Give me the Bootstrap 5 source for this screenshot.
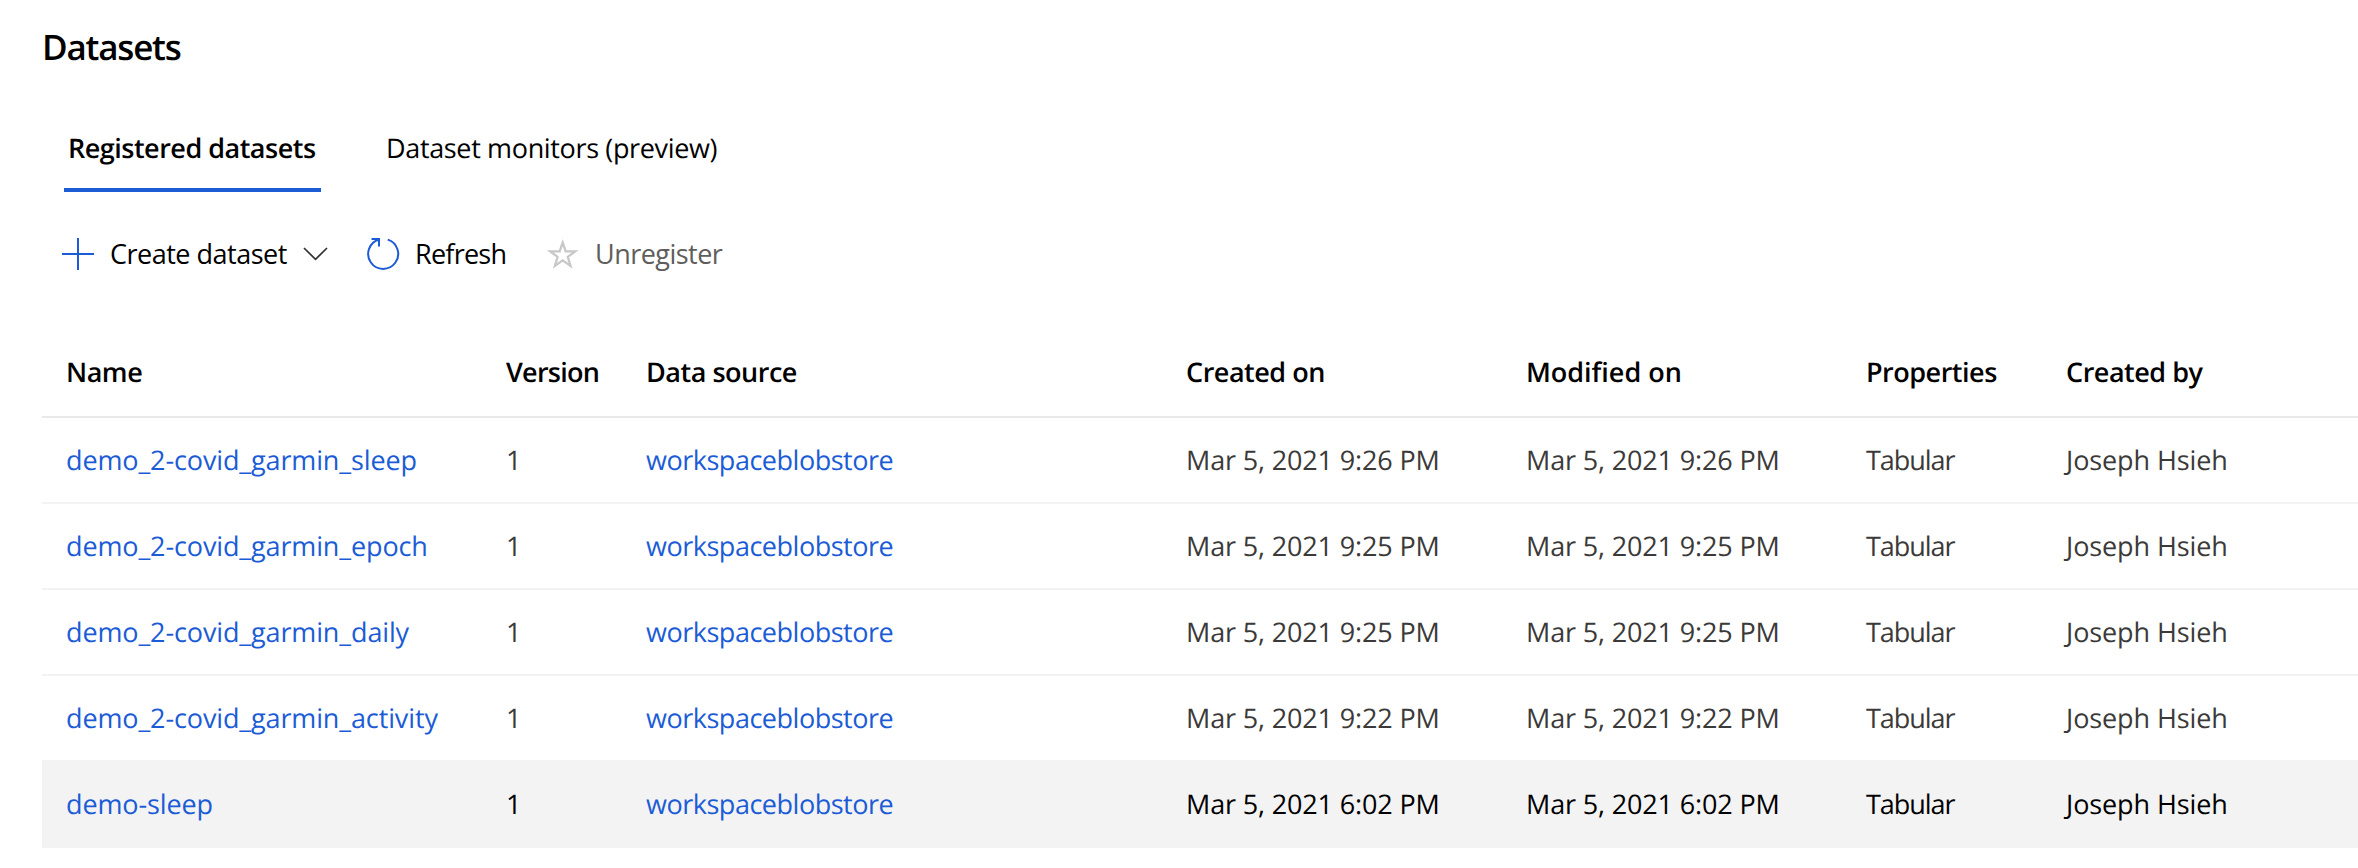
<!DOCTYPE html>
<html lang="en">
<head>
<meta charset="utf-8">
<meta name="viewport" content="width=device-width, initial-scale=1">
<title>Datasets</title>
<link href="https://cdn.jsdelivr.net/npm/bootstrap@5.3.0/dist/css/bootstrap.min.css" rel="stylesheet">
<style>
body { font-family: "Open Sans", "Noto Sans", sans-serif; font-size: 27px; color: #000; text-rendering: geometricPrecision; overflow: hidden; }
.page { padding: 18px 0 0 42px; }
.page-title { font-size: 35px; font-weight: 600; line-height: 60px; letter-spacing: -1.2px; margin: 0 0 29px; }
.tabs { gap: 60px; padding-left: 22px; }
.tabs .nav-link { color: #000; line-height: 81px; padding: 0 5px; border-bottom: 4px solid transparent; letter-spacing: -.35px; }
.tabs .nav-link.active { font-weight: 600; border-color: #1b5cd6; letter-spacing: -.5px; width: 257px; padding-left: 4px; white-space: nowrap; }
.toolbar { height: 48px; margin-top: 38px; padding-left: 19px; }
.tool { border: 0; padding: 0; background: none; color: #000; font-size: 27px; line-height: 48px; white-space: nowrap; letter-spacing: -.5px; text-align: left; }
.tool svg { flex: none; }
.tool span { margin-left: 15px; }
.tool-create { width: 305px; }
.tool-refresh { width: 180px; letter-spacing: -.75px; }
.tool-off, .tool-off:disabled { color: #605e5c; letter-spacing: -.53px; }
.grid-table { table-layout: fixed; margin-top: 48px; width: 2316px; color: #3b3a39; letter-spacing: -.15px; --bs-table-bg: transparent; }
.grid-table > :not(caption) > * > * { padding: 0; white-space: nowrap; border-bottom: 2px solid #f3f3f3; color: inherit; }
.grid-table > thead > tr > th { line-height: 89px; padding-top: 1px; font-weight: 600; color: #000; border-bottom-color: #e9e9e9; letter-spacing: -.48px; }
.grid-table > tbody > tr > td { line-height: 84px; }
.grid-table > :not(caption) > tr > :first-child { padding-left: 24px; }
.grid-table a { color: #1b5cd6; text-decoration: none; }
.grid-table .ds-name { letter-spacing: -.13px; }
.grid-table .ds-source { letter-spacing: -.48px; }
.grid-table .ds-kind { letter-spacing: -1.05px; }
.grid-table .ds-owner { letter-spacing: -.1px; }
.row-hover { background: #f3f3f3; color: #000; }
.grid-table > thead > tr > .tight { letter-spacing: -.75px; }
.grid-table > thead > tr > .loose { letter-spacing: -.02px; }
</style>
</head>
<body class="bg-white">
<main class="page">
  <h1 class="page-title">Datasets</h1>
  <nav class="nav tabs">
    <a class="nav-link active" href="#">Registered datasets</a>
    <a class="nav-link" href="#">Dataset monitors (preview)</a>
  </nav>
  <div class="toolbar d-flex align-items-center">
    <button class="tool tool-create d-flex align-items-center" type="button">
      <svg width="34" height="34" viewBox="0 0 34 34" fill="none" stroke="#1b5cd6" stroke-width="2"><path d="M17 1v32M1 17h32"/></svg>
      <span>Create dataset</span>
      <svg class="ms-3" width="25" height="16" viewBox="0 0 25 16" fill="none" stroke="#323130" stroke-width="1.7"><path d="M1 2l11.5 11.3L24 2"/></svg>
    </button>
    <button class="tool tool-refresh d-flex align-items-center" type="button">
      <svg width="34" height="34" viewBox="0 0 34 34" fill="none" stroke="#1b5cd6" stroke-width="2"><path d="M5.5 2H13v7.5M13 2.5A15 15 0 1 0 21.7 2.6"/></svg>
      <span>Refresh</span>
    </button>
    <button class="tool tool-off d-flex align-items-center" type="button" disabled>
      <svg width="34" height="34" viewBox="0 0 34 34" fill="none" stroke="#c8c8c8" stroke-width="2.3"><path d="M16.7 5.5l3 8.9h9.5l-7.4 5.5 2.7 9-7.8-5.5-7.8 5.5 2.7-9-7.4-5.5h9.5z"/></svg>
      <span>Unregister</span>
    </button>
  </div>
  <table class="table grid-table mb-0">
    <colgroup><col style="width:464px"><col style="width:140px"><col style="width:540px"><col style="width:340px"><col style="width:340px"><col style="width:200px"><col></colgroup>
    <thead>
      <tr><th>Name</th><th class="tight">Version</th><th>Data source</th><th>Created on</th><th class="loose">Modified on</th><th>Properties</th><th>Created by</th></tr>
    </thead>
    <tbody>
      <tr><td class="ds-name"><a href="#">demo_2-covid_garmin_sleep</a></td><td>1</td><td class="ds-source"><a href="#">workspaceblobstore</a></td><td>Mar 5, 2021 9:26 PM</td><td>Mar 5, 2021 9:26 PM</td><td class="ds-kind">Tabular</td><td class="ds-owner">Joseph Hsieh</td></tr>
      <tr><td class="ds-name"><a href="#">demo_2-covid_garmin_epoch</a></td><td>1</td><td class="ds-source"><a href="#">workspaceblobstore</a></td><td>Mar 5, 2021 9:25 PM</td><td>Mar 5, 2021 9:25 PM</td><td class="ds-kind">Tabular</td><td class="ds-owner">Joseph Hsieh</td></tr>
      <tr><td class="ds-name"><a href="#">demo_2-covid_garmin_daily</a></td><td>1</td><td class="ds-source"><a href="#">workspaceblobstore</a></td><td>Mar 5, 2021 9:25 PM</td><td>Mar 5, 2021 9:25 PM</td><td class="ds-kind">Tabular</td><td class="ds-owner">Joseph Hsieh</td></tr>
      <tr><td class="ds-name"><a href="#">demo_2-covid_garmin_activity</a></td><td>1</td><td class="ds-source"><a href="#">workspaceblobstore</a></td><td>Mar 5, 2021 9:22 PM</td><td>Mar 5, 2021 9:22 PM</td><td class="ds-kind">Tabular</td><td class="ds-owner">Joseph Hsieh</td></tr>
      <tr class="row-hover"><td class="ds-name"><a href="#">demo-sleep</a></td><td>1</td><td class="ds-source"><a href="#">workspaceblobstore</a></td><td>Mar 5, 2021 6:02 PM</td><td>Mar 5, 2021 6:02 PM</td><td class="ds-kind">Tabular</td><td class="ds-owner">Joseph Hsieh</td></tr>
    </tbody>
  </table>
</main>
<script src="https://cdn.jsdelivr.net/npm/bootstrap@5.3.0/dist/js/bootstrap.bundle.min.js"></script>
</body>
</html>
